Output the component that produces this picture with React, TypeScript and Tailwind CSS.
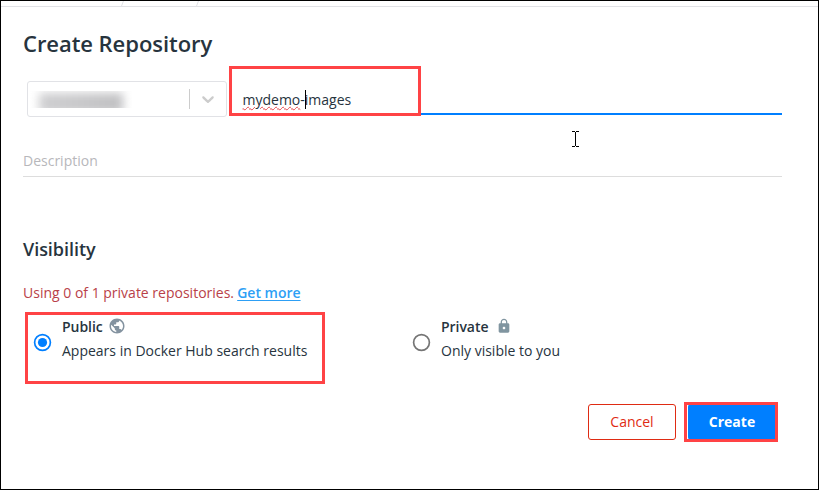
import React from "react";

function GlobeIcon() {
  return (
    <svg className="-mt-0.5 h-[18px] w-[18px]" viewBox="0 0 24 24" fill="#8493a0">
      <path d="M12 2C6.48 2 2 6.48 2 12s4.48 10 10 10 10-4.48 10-10S17.52 2 12 2zm-1 17.93c-3.95-.49-7-3.85-7-7.93 0-.62.08-1.21.21-1.79L9 15v1c0 1.1.9 2 2 2v1.93zm6.9-2.54c-.26-.81-1-1.39-1.9-1.39h-1v-3c0-.55-.45-1-1-1H8v-2h2c.55 0 1-.45 1-1V7h2c1.1 0 2-.9 2-2v-.41c2.93 1.19 5 4.06 5 7.41 0 2.08-.8 3.97-2.1 5.39z" />
    </svg>
  );
}

function LockIcon() {
  return (
    <svg className="-mt-0.5 h-4 w-4" viewBox="0 0 24 24" fill="#8095a0">
      <path d="M18 8h-1V6c0-2.76-2.24-5-5-5S7 3.24 7 6v2H6c-1.1 0-2 .9-2 2v10c0 1.1.9 2 2 2h12c1.1 0 2-.9 2-2V10c0-1.1-.9-2-2-2zm-6 9c-1.1 0-2-.9-2-2s.9-2 2-2 2 .9 2 2-.9 2-2 2zm3.1-9H8.9V6c0-1.71 1.39-3.1 3.1-3.1 1.71 0 3.1 1.39 3.1 3.1v2z" />
    </svg>
  );
}

type OptionProps = {
  label: string;
  hint: string;
  icon: React.ReactNode;
  checked?: boolean;
};

function VisibilityOption({ label, hint, icon, checked }: OptionProps) {
  return (
    <div className="flex w-[379px] items-center">
      <svg className="mt-1.5 ml-[9px] h-[21px] w-[21px] shrink-0" viewBox="0 0 21 21">
        <circle cx="10.5" cy="10.5" r="7.9" fill="none" strokeWidth="1.7" stroke={checked ? "#007fff" : "#757575"} />
        {checked && <circle cx="10.5" cy="10.5" r="4.6" fill="#007fff" />}
      </svg>
      <div className="ml-[9px] whitespace-nowrap">
        <div className="flex h-6 items-center">
          <span className="font-semibold tracking-[-0.05px]">{label}</span>
          {icon}
        </div>
        <div className="h-6 leading-6">{hint}</div>
      </div>
    </div>
  );
}

export default function App() {
  return (
    <div className="relative flex h-[490px] w-[819px] flex-col overflow-hidden border border-black bg-white font-['Open_Sans','Noto_Sans',sans-serif] text-sm text-[#27343e]">
      <div className="flex h-[6px] shrink-0 border-b border-[#e1e2e6]">
        <div className="ml-[121px] h-[5px] w-[76px] -skew-x-[20deg] border-x border-[#e1e2e6]" />
      </div>

      <main className="flex w-[781px] flex-col pl-[22px]">
        <h1 className="mt-5 h-8 text-[22px] leading-8 font-semibold tracking-[-0.05px]">Create Repository</h1>

        <div className="mt-[22px] flex h-9">
          <div className="ml-1 flex h-9 w-[200px] shrink-0 items-center rounded-[3px] border border-[#e1e2e6]">
            <div className="mt-[1px] ml-[2px] h-[17px] w-[104px] overflow-hidden">
              <div className="mt-0.5 ml-[9px] h-5 w-[84px] bg-gradient-to-r from-[#cfcfd1] via-[#c8c8ca] to-[#c0c0c2] blur-[5px]" />
            </div>
            <div className="ml-[55px] h-5 w-px bg-[#cccccc]" />
            <svg className="ml-2 h-5 w-5" viewBox="0 0 20 20" fill="#cccccc">
              <path d="M4.516 7.548c0.436-0.446 1.043-0.481 1.576 0l3.908 3.747 3.908-3.747c0.533-0.481 1.141-0.446 1.574 0 0.436 0.445 0.408 1.197 0 1.615-0.406 0.418-4.695 4.502-4.695 4.502-0.217 0.223-0.502 0.335-0.787 0.335s-0.57-0.112-0.789-0.335c0 0-4.287-4.084-4.695-4.502s-0.436-1.17 0-1.615z" />
            </svg>
          </div>
          <div className="ml-1 h-[34px] grow border-b-2 border-[#007fff] pt-[7px] pl-[11.5px] leading-6">
            <span className="underline decoration-[#e5484d] decoration-wavy decoration-[0.7px] underline-offset-[1px]">mydemo</span>-images
          </div>
        </div>

        <div className="mt-[32px] h-7 border-b border-[#dddddd] leading-6 text-[#b7b7bb]">Description</div>

        <h2 className="mt-[58px] h-7 text-[18px] leading-7 font-semibold tracking-[-0.05px]">Visibility</h2>

        <p className="mt-[18px] h-6 leading-6 text-[#b93f49]">
          Using 0 of 1 private repositories.{" "}
          <a className="-ml-[0.5px] font-semibold text-[#2d9ff5] underline underline-offset-2">Get more</a>
        </p>

        <div className="mt-[10px] flex h-12">
          <VisibilityOption label="Public" hint="Appears in Docker Hub search results" icon={<span className="ml-[5px]"><GlobeIcon /></span>} checked />
          <VisibilityOption label="Private" hint="Only visible to you" icon={<span className="ml-[8px]"><LockIcon /></span>} />
        </div>

        <div className="mt-[41px] flex justify-end gap-3 pr-[6px]">
          <button className="h-9 w-[88px] rounded-[3px] border border-[#df2b13] font-medium text-[#df2b13]">Cancel</button>
          <button className="h-9 w-[88px] rounded-[3px] bg-[#007fff] font-bold text-white">Create</button>
        </div>
      </main>

      <div className="absolute top-[65px] left-[228px] h-[50px] w-[192px] border-[3px] border-[#ff4345]" />
      <div className="absolute top-[311px] left-[24px] h-[72px] w-[300px] border-[3px] border-[#ff4345]" />
      <div className="absolute top-[401px] left-[683px] h-10 w-[94px] border-[3px] border-[#ff4345]" />
      <div className="absolute top-[89px] left-[304px] h-[19px] w-px bg-black" />
      <svg className="absolute top-[130px] left-[571px] h-4 w-[7px]" viewBox="0 0 7 16" fill="none" stroke="black" shapeRendering="crispEdges">
        <path d="M0 .5H3M4 .5H7M3.5 1V15M0 15.5H3M4 15.5H7" />
      </svg>
    </div>
  );
}
